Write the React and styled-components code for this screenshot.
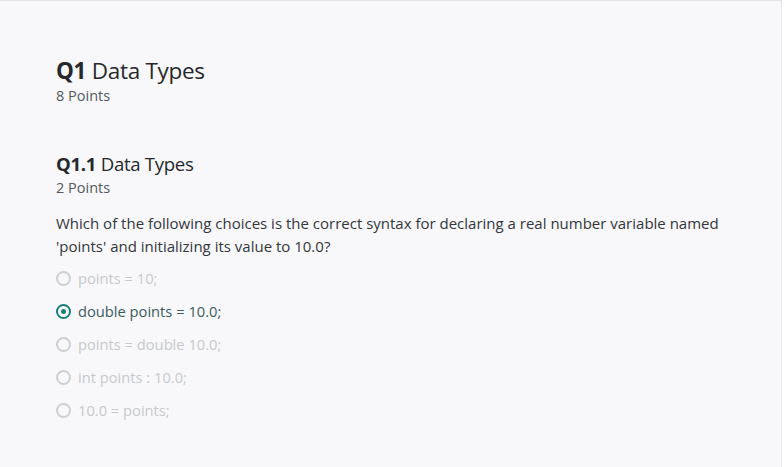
import React from 'react'
import styled, { createGlobalStyle } from 'styled-components'

const Global = createGlobalStyle`
  html, body {
    margin: 0;
    padding: 0;
    background: #ffffff;
  }
  body {
    font-family: "Open Sans", Lato, sans-serif;
  }
`

const Page = styled.div`
  box-sizing: border-box;
  width: 782px;
  height: 467px;
  background-color: #f8f8fa;
  border-top: 1px solid #e3e5ea;
  border-right: 1px solid #e6e7eb;
  padding: 57px 0 0 56px;
`

const Heading = styled.h1`
  margin: 0;
  font-size: ${p => p.$size}px;
  line-height: ${p => p.$line}px;
  font-weight: 400;
  letter-spacing: -0.3px;
  color: #26282c;
`

const Num = styled.b`
  font-weight: 700;
`

const Points = styled.div`
  font-size: 14.5px;
  line-height: 18px;
  color: #55585e;
  margin-top: ${p => p.$top || 0}px;
`

const Part = styled.section`
  margin-top: 48px;
`

const Prompt = styled.p`
  margin: 15px 0 0;
  font-size: 15px;
  line-height: 23px;
  color: #33363b;
  width: 680px;
`

const Options = styled.div`
  display: flex;
  flex-direction: column;
  gap: 13px;
  margin-top: 10px;
`

const Option = styled.label`
  display: flex;
  align-items: center;
  gap: 7px;
  font-size: 14.7px;
  height: 20px;
  color: ${p => (p.$checked ? '#3b5c5e' : '#c7c9cb')};
`

const Radio = styled.span`
  box-sizing: border-box;
  width: 15px;
  height: 15px;
  border-radius: 50%;
  border: 2.5px solid ${p => (p.$checked ? '#16817c' : '#cdcfd1')};
  display: flex;
  align-items: center;
  justify-content: center;
  &::after {
    content: '';
    width: 5px;
    height: 5px;
    border-radius: 50%;
    background: #16817c;
    display: ${p => (p.$checked ? 'block' : 'none')};
  }
`

const choices = [
  'points = 10;',
  'double points = 10.0;',
  'points = double 10.0;',
  'int points : 10.0;',
  '10.0 = points;',
]

export default function App() {
  return (
    <>
      <Global />
      <Page>
        <Heading $size={22.5} $line={26}><Num>Q1</Num> Data Types</Heading>
        <Points $top={3}>8 Points</Points>
        <Part>
          <Heading $size={18.6} $line={22}><Num>Q1.1</Num> Data Types</Heading>
          <Points $top={4}>2 Points</Points>
          <Prompt>
            Which of the following choices is the correct syntax for declaring a real number variable named
            'points' and initializing its value to 10.0?
          </Prompt>
          <Options>
            {choices.map((c, i) => (
              <Option key={c} $checked={i === 1}>
                <Radio $checked={i === 1} />
                {c}
              </Option>
            ))}
          </Options>
        </Part>
      </Page>
    </>
  )
}
